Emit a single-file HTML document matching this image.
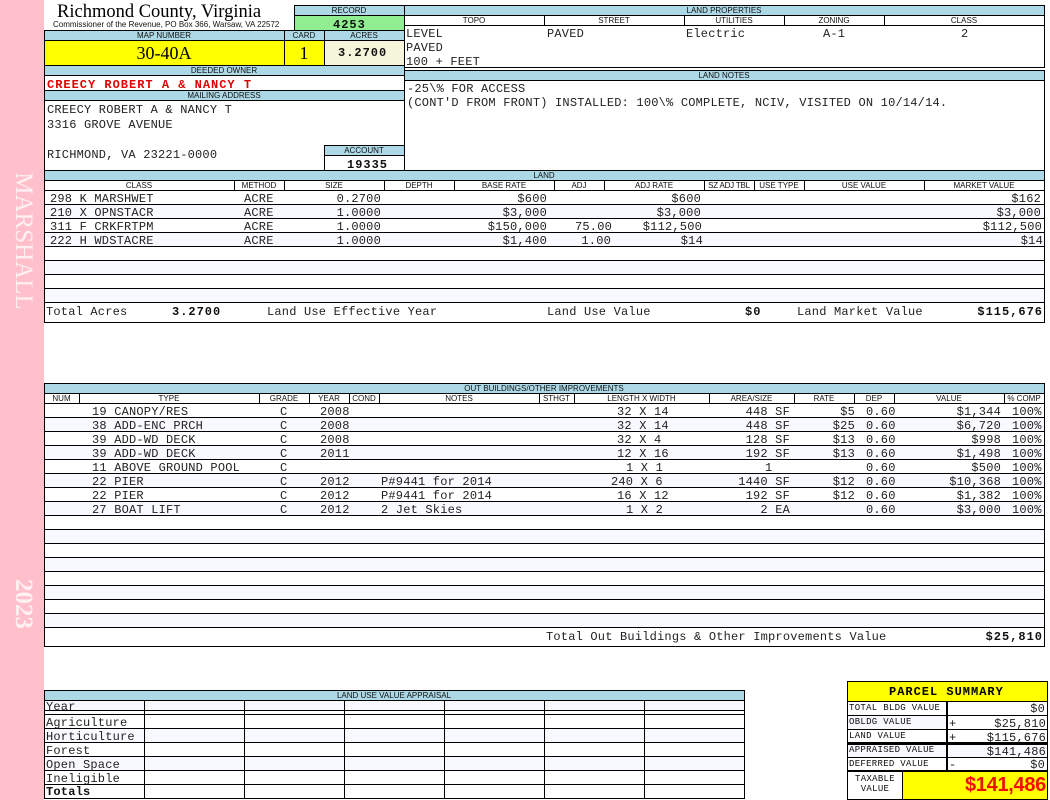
<!DOCTYPE html>
<html><head><meta charset="utf-8"><title>Richmond County, Virginia</title>
<style>
html,body{margin:0;padding:0;background:#fff;width:1050px;height:800px;overflow:hidden}
#p{position:relative;width:1050px;height:800px;overflow:hidden}
#p div{position:absolute}
.b{background:#ADD8E6}
.g{background:#F8F8FF;left:45px;width:999px;height:13px}
.h{background:#000;height:1px}
.v{background:#000;width:1px}
.l{font:8px/10px "Liberation Sans",sans-serif;text-align:center;color:#111;white-space:nowrap;height:10px}
.t,.r{font:12px/14px "Liberation Mono",monospace;letter-spacing:.2px;color:#222;white-space:pre;height:14px;transform:translateY(1px)}
.bd{font-weight:bold;letter-spacing:1px;color:#111}
.s{font:9px/13px "Liberation Mono",monospace;letter-spacing:.3px;color:#111;white-space:pre}
</style></head><body><div id="p">
<div style="left:0;top:0;width:44px;height:800px;background:#FFC0CB"></div>
<div style="left:-47px;top:226px;width:140px;height:30px;transform:rotate(90deg);font:25px/30px 'Liberation Serif',serif;color:#FFF0F2;text-align:center;white-space:nowrap">MARSHALL</div>
<div style="left:-7px;top:589px;width:60px;height:30px;transform:rotate(90deg);font:bold 25px/30px 'Liberation Serif',serif;color:#FFF0F2;text-align:center">2023</div>

<div style="left:57px;top:2px;font:18.5px/20px 'Liberation Serif',serif;color:#000;white-space:nowrap">Richmond County, Virginia</div>
<div style="left:53px;top:20px;font:8px/10px 'Liberation Sans',sans-serif;color:#111;white-space:nowrap">Commissioner of the Revenue, PO Box 366, Warsaw, VA 22572</div>

<!-- backgrounds top-left -->
<div class="b" style="left:294px;top:5px;width:110px;height:11px"></div>
<div style="left:294px;top:16px;width:110px;height:14px;background:#90EE90"></div>
<div class="b" style="left:44px;top:30px;width:360px;height:11px"></div>
<div style="left:44px;top:41px;width:280px;height:24px;background:#FFFF00"></div>
<div style="left:324px;top:41px;width:80px;height:24px;background:#F5F5DC"></div>
<div class="b" style="left:44px;top:65px;width:360px;height:10px"></div>
<div class="b" style="left:44px;top:90px;width:360px;height:10px"></div>
<div class="b" style="left:324px;top:145px;width:80px;height:10px"></div>

<div class="h" style="left:294px;top:5px;width:751px"></div>
<div class="h" style="left:294px;top:15px;width:110px"></div>
<div class="h" style="left:44px;top:30px;width:360px"></div>
<div class="h" style="left:44px;top:40px;width:360px"></div>
<div class="h" style="left:44px;top:65px;width:360px"></div>
<div class="h" style="left:44px;top:75px;width:360px"></div>
<div class="h" style="left:44px;top:90px;width:360px"></div>
<div class="h" style="left:44px;top:100px;width:360px"></div>
<div class="h" style="left:324px;top:145px;width:80px"></div>
<div class="h" style="left:324px;top:155px;width:80px"></div>
<div class="v" style="left:294px;top:5px;height:25px"></div>
<div class="v" style="left:44px;top:30px;height:140px"></div>
<div class="v" style="left:284px;top:30px;height:35px"></div>
<div class="v" style="left:324px;top:30px;height:35px"></div>
<div class="v" style="left:324px;top:145px;height:25px"></div>
<div class="v" style="left:404px;top:5px;height:165px"></div>

<div class="l" style="left:294px;top:6px;width:110px">RECORD</div>
<div class="t bd" style="left:333px;top:17px">4253</div>
<div class="l" style="left:44px;top:31px;width:240px">MAP NUMBER</div>
<div class="l" style="left:284px;top:31px;width:40px">CARD</div>
<div class="l" style="left:324px;top:31px;width:80px">ACRES</div>
<div style="left:44px;top:42px;width:240px;text-align:center;font:18px/22px 'Liberation Serif',serif;color:#000">30-40A</div>
<div style="left:284px;top:42px;width:40px;text-align:center;font:18px/22px 'Liberation Serif',serif;color:#000">1</div>
<div class="t bd" style="left:338px;top:45px">3.2700</div>
<div class="l" style="left:44px;top:66px;width:360px">DEEDED OWNER</div>
<div class="t bd" style="left:47px;top:77px;color:#E00000">CREECY ROBERT A &amp; NANCY T</div>
<div class="l" style="left:44px;top:91px;width:360px">MAILING ADDRESS</div>
<div class="t" style="left:47px;top:102px">CREECY ROBERT A &amp; NANCY T</div>
<div class="t" style="left:47px;top:117px">3316 GROVE AVENUE</div>
<div class="t" style="left:47px;top:147px">RICHMOND, VA 23221-0000</div>
<div class="l" style="left:324px;top:146px;width:80px">ACCOUNT</div>
<div class="t bd" style="left:347px;top:157px">19335</div>

<!-- land properties -->
<div class="b" style="left:405px;top:6px;width:639px;height:9px"></div>
<div class="h" style="left:404px;top:15px;width:641px"></div>
<div class="h" style="left:404px;top:25px;width:641px"></div>
<div class="h" style="left:404px;top:67px;width:641px"></div>
<div class="v" style="left:1044px;top:5px;height:63px"></div>
<div class="v" style="left:544px;top:15px;height:10px"></div>
<div class="v" style="left:684px;top:15px;height:10px"></div>
<div class="v" style="left:784px;top:15px;height:10px"></div>
<div class="v" style="left:884px;top:15px;height:10px"></div>
<div class="l" style="left:404px;top:6px;width:640px">LAND PROPERTIES</div>
<div class="l" style="left:404px;top:16px;width:140px">TOPO</div>
<div class="l" style="left:544px;top:16px;width:140px">STREET</div>
<div class="l" style="left:684px;top:16px;width:100px">UTILITIES</div>
<div class="l" style="left:784px;top:16px;width:100px">ZONING</div>
<div class="l" style="left:884px;top:16px;width:160px">CLASS</div>
<div class="t" style="left:406px;top:26px">LEVEL</div>
<div class="t" style="left:547px;top:26px">PAVED</div>
<div class="t" style="left:686px;top:26px">Electric</div>
<div class="t" style="left:823px;top:26px">A-1</div>
<div class="t" style="left:961px;top:26px">2</div>
<div class="t" style="left:406px;top:40px">PAVED</div>
<div class="t" style="left:406px;top:54px">100 + FEET</div>

<!-- land notes -->
<div class="h" style="left:404px;top:70px;width:641px"></div>
<div class="b" style="left:405px;top:71px;width:639px;height:9px"></div>
<div class="h" style="left:404px;top:80px;width:641px"></div>
<div class="v" style="left:1044px;top:70px;height:100px"></div>
<div class="l" style="left:404px;top:71px;width:640px">LAND NOTES</div>
<div class="t" style="left:407px;top:81px">-25\% FOR ACCESS</div>
<div class="t" style="left:407px;top:95px">(CONT'D FROM FRONT) INSTALLED: 100\% COMPLETE, NCIV, VISITED ON 10/14/14.</div>

<!-- land table -->
<div class="b" style="left:44px;top:170px;width:1001px;height:10px"></div>
<div class="g" style="top:205px"></div><div class="g" style="top:233px"></div><div class="g" style="top:261px"></div><div class="g" style="top:289px"></div>
<div class="h" style="left:44px;top:170px;width:1001px"></div>
<div class="h" style="left:44px;top:180px;width:1001px"></div>
<div class="h" style="left:44px;top:190px;width:1001px"></div>
<div class="h" style="left:44px;top:204px;width:1001px"></div>
<div class="h" style="left:44px;top:218px;width:1001px"></div>
<div class="h" style="left:44px;top:232px;width:1001px"></div>
<div class="h" style="left:44px;top:246px;width:1001px"></div>
<div class="h" style="left:44px;top:260px;width:1001px"></div>
<div class="h" style="left:44px;top:274px;width:1001px"></div>
<div class="h" style="left:44px;top:288px;width:1001px"></div>
<div class="h" style="left:44px;top:302px;width:1001px"></div>
<div class="h" style="left:44px;top:322px;width:1001px"></div>
<div class="v" style="left:44px;top:170px;height:152px"></div>
<div class="v" style="left:1044px;top:170px;height:152px"></div>
<div class="v" style="left:234px;top:180px;height:10px"></div>
<div class="v" style="left:284px;top:180px;height:10px"></div>
<div class="v" style="left:384px;top:180px;height:10px"></div>
<div class="v" style="left:454px;top:180px;height:10px"></div>
<div class="v" style="left:554px;top:180px;height:10px"></div>
<div class="v" style="left:604px;top:180px;height:10px"></div>
<div class="v" style="left:704px;top:180px;height:10px"></div>
<div class="v" style="left:754px;top:180px;height:10px"></div>
<div class="v" style="left:804px;top:180px;height:10px"></div>
<div class="v" style="left:924px;top:180px;height:10px"></div>
<div class="l" style="left:44px;top:171px;width:1000px">LAND</div>
<div class="l" style="left:44px;top:181px;width:190px">CLASS</div>
<div class="l" style="left:234px;top:181px;width:50px">METHOD</div>
<div class="l" style="left:284px;top:181px;width:100px">SIZE</div>
<div class="l" style="left:384px;top:181px;width:70px">DEPTH</div>
<div class="l" style="left:454px;top:181px;width:100px">BASE RATE</div>
<div class="l" style="left:554px;top:181px;width:50px">ADJ</div>
<div class="l" style="left:604px;top:181px;width:100px">ADJ RATE</div>
<div class="l" style="left:704px;top:181px;width:50px;letter-spacing:-.2px">SZ ADJ TBL</div>
<div class="l" style="left:754px;top:181px;width:50px">USE TYPE</div>
<div class="l" style="left:804px;top:181px;width:120px">USE VALUE</div>
<div class="l" style="left:924px;top:181px;width:120px">MARKET VALUE</div>

<div class="t" style="left:50px;top:191px">298 K MARSHWET</div><div class="t" style="left:244px;top:191px">ACRE</div><div class="r" style="right:669px;top:191px">0.2700</div><div class="r" style="right:503px;top:191px">$600</div><div class="r" style="right:349px;top:191px">$600</div><div class="r" style="right:9px;top:191px">$162</div>
<div class="t" style="left:50px;top:205px">210 X OPNSTACR</div><div class="t" style="left:244px;top:205px">ACRE</div><div class="r" style="right:669px;top:205px">1.0000</div><div class="r" style="right:503px;top:205px">$3,000</div><div class="r" style="right:349px;top:205px">$3,000</div><div class="r" style="right:9px;top:205px">$3,000</div>
<div class="t" style="left:50px;top:219px">311 F CRKFRTPM</div><div class="t" style="left:244px;top:219px">ACRE</div><div class="r" style="right:669px;top:219px">1.0000</div><div class="r" style="right:503px;top:219px">$150,000</div><div class="r" style="right:438px;top:219px">75.00</div><div class="r" style="right:348px;top:219px">$112,500</div><div class="r" style="right:8px;top:219px">$112,500</div>
<div class="t" style="left:50px;top:233px">222 H WDSTACRE</div><div class="t" style="left:244px;top:233px">ACRE</div><div class="r" style="right:669px;top:233px">1.0000</div><div class="r" style="right:503px;top:233px">$1,400</div><div class="r" style="right:439px;top:233px">1.00</div><div class="r" style="right:347px;top:233px">$14</div><div class="r" style="right:7px;top:233px">$14</div>

<div class="t" style="left:46px;top:304px">Total Acres</div>
<div class="t bd" style="left:172px;top:304px;letter-spacing:1px">3.2700</div>
<div class="t" style="left:267px;top:304px">Land Use Effective Year</div>
<div class="t" style="left:547px;top:304px">Land Use Value</div>
<div class="t bd" style="left:745px;top:304px">$0</div>
<div class="t" style="left:797px;top:304px">Land Market Value</div>
<div class="r bd" style="right:7px;top:304px">$115,676</div>

<!-- out buildings -->
<div class="b" style="left:44px;top:383px;width:1001px;height:10px"></div>
<div class="g" style="top:418px"></div><div class="g" style="top:446px"></div><div class="g" style="top:474px"></div><div class="g" style="top:502px"></div><div class="g" style="top:530px"></div><div class="g" style="top:558px"></div><div class="g" style="top:586px"></div><div class="g" style="top:614px"></div>
<div class="h" style="left:44px;top:383px;width:1001px"></div>
<div class="h" style="left:44px;top:393px;width:1001px"></div>
<div class="h" style="left:44px;top:403px;width:1001px"></div>
<div class="h" style="left:44px;top:417px;width:1001px"></div>
<div class="h" style="left:44px;top:431px;width:1001px"></div>
<div class="h" style="left:44px;top:445px;width:1001px"></div>
<div class="h" style="left:44px;top:459px;width:1001px"></div>
<div class="h" style="left:44px;top:473px;width:1001px"></div>
<div class="h" style="left:44px;top:487px;width:1001px"></div>
<div class="h" style="left:44px;top:501px;width:1001px"></div>
<div class="h" style="left:44px;top:515px;width:1001px"></div>
<div class="h" style="left:44px;top:529px;width:1001px"></div>
<div class="h" style="left:44px;top:543px;width:1001px"></div>
<div class="h" style="left:44px;top:557px;width:1001px"></div>
<div class="h" style="left:44px;top:571px;width:1001px"></div>
<div class="h" style="left:44px;top:585px;width:1001px"></div>
<div class="h" style="left:44px;top:599px;width:1001px"></div>
<div class="h" style="left:44px;top:613px;width:1001px"></div>
<div class="h" style="left:44px;top:627px;width:1001px"></div>
<div class="h" style="left:44px;top:646px;width:1001px"></div>
<div class="v" style="left:44px;top:383px;height:264px"></div>
<div class="v" style="left:1044px;top:383px;height:264px"></div>
<div class="v" style="left:79px;top:393px;height:10px"></div>
<div class="v" style="left:259px;top:393px;height:10px"></div>
<div class="v" style="left:309px;top:393px;height:10px"></div>
<div class="v" style="left:349px;top:393px;height:10px"></div>
<div class="v" style="left:379px;top:393px;height:10px"></div>
<div class="v" style="left:539px;top:393px;height:10px"></div>
<div class="v" style="left:574px;top:393px;height:10px"></div>
<div class="v" style="left:709px;top:393px;height:10px"></div>
<div class="v" style="left:794px;top:393px;height:10px"></div>
<div class="v" style="left:854px;top:393px;height:10px"></div>
<div class="v" style="left:894px;top:393px;height:10px"></div>
<div class="v" style="left:1004px;top:393px;height:10px"></div>
<div class="l" style="left:44px;top:384px;width:1000px">OUT BUILDINGS/OTHER IMPROVEMENTS</div>
<div class="l" style="left:44px;top:394px;width:35px">NUM</div>
<div class="l" style="left:79px;top:394px;width:180px">TYPE</div>
<div class="l" style="left:259px;top:394px;width:50px">GRADE</div>
<div class="l" style="left:309px;top:394px;width:40px">YEAR</div>
<div class="l" style="left:349px;top:394px;width:30px">COND</div>
<div class="l" style="left:379px;top:394px;width:160px">NOTES</div>
<div class="l" style="left:539px;top:394px;width:35px">STHGT</div>
<div class="l" style="left:574px;top:394px;width:135px">LENGTH X WIDTH</div>
<div class="l" style="left:709px;top:394px;width:85px">AREA/SIZE</div>
<div class="l" style="left:794px;top:394px;width:60px">RATE</div>
<div class="l" style="left:854px;top:394px;width:40px">DEP</div>
<div class="l" style="left:894px;top:394px;width:110px">VALUE</div>
<div class="l" style="left:1004px;top:394px;width:40px">% COMP</div>

<div class="t" style="left:92px;top:404px">19 CANOPY/RES</div><div class="t" style="left:280px;top:404px">C</div><div class="t" style="left:320px;top:404px">2008</div><div class="t" style="left:617px;top:404px">32 X 14</div><div class="r" style="right:260px;top:404px">448 SF</div><div class="r" style="right:195px;top:404px">$5</div><div class="t" style="left:866px;top:404px">0.60</div><div class="r" style="right:49px;top:404px">$1,344</div><div class="t" style="left:1012px;top:404px">100%</div>
<div class="t" style="left:92px;top:418px">38 ADD-ENC PRCH</div><div class="t" style="left:280px;top:418px">C</div><div class="t" style="left:320px;top:418px">2008</div><div class="t" style="left:617px;top:418px">32 X 14</div><div class="r" style="right:260px;top:418px">448 SF</div><div class="r" style="right:195px;top:418px">$25</div><div class="t" style="left:866px;top:418px">0.60</div><div class="r" style="right:49px;top:418px">$6,720</div><div class="t" style="left:1012px;top:418px">100%</div>
<div class="t" style="left:92px;top:432px">39 ADD-WD DECK</div><div class="t" style="left:280px;top:432px">C</div><div class="t" style="left:320px;top:432px">2008</div><div class="t" style="left:617px;top:432px">32 X 4</div><div class="r" style="right:260px;top:432px">128 SF</div><div class="r" style="right:195px;top:432px">$13</div><div class="t" style="left:866px;top:432px">0.60</div><div class="r" style="right:49px;top:432px">$998</div><div class="t" style="left:1012px;top:432px">100%</div>
<div class="t" style="left:92px;top:446px">39 ADD-WD DECK</div><div class="t" style="left:280px;top:446px">C</div><div class="t" style="left:320px;top:446px">2011</div><div class="t" style="left:617px;top:446px">12 X 16</div><div class="r" style="right:260px;top:446px">192 SF</div><div class="r" style="right:195px;top:446px">$13</div><div class="t" style="left:866px;top:446px">0.60</div><div class="r" style="right:49px;top:446px">$1,498</div><div class="t" style="left:1012px;top:446px">100%</div>
<div class="t" style="left:92px;top:460px">11 ABOVE GROUND POOL</div><div class="t" style="left:280px;top:460px">C</div><div class="t" style="left:626px;top:460px">1 X 1</div><div class="t" style="left:765px;top:460px">1</div><div class="t" style="left:866px;top:460px">0.60</div><div class="r" style="right:49px;top:460px">$500</div><div class="t" style="left:1012px;top:460px">100%</div>
<div class="t" style="left:92px;top:474px">22 PIER</div><div class="t" style="left:280px;top:474px">C</div><div class="t" style="left:320px;top:474px">2012</div><div class="t" style="left:381px;top:474px">P#9441 for 2014</div><div class="t" style="left:611px;top:474px">240 X 6</div><div class="r" style="right:260px;top:474px">1440 SF</div><div class="r" style="right:195px;top:474px">$12</div><div class="t" style="left:866px;top:474px">0.60</div><div class="r" style="right:49px;top:474px">$10,368</div><div class="t" style="left:1012px;top:474px">100%</div>
<div class="t" style="left:92px;top:488px">22 PIER</div><div class="t" style="left:280px;top:488px">C</div><div class="t" style="left:320px;top:488px">2012</div><div class="t" style="left:381px;top:488px">P#9441 for 2014</div><div class="t" style="left:617px;top:488px">16 X 12</div><div class="r" style="right:260px;top:488px">192 SF</div><div class="r" style="right:195px;top:488px">$12</div><div class="t" style="left:866px;top:488px">0.60</div><div class="r" style="right:49px;top:488px">$1,382</div><div class="t" style="left:1012px;top:488px">100%</div>
<div class="t" style="left:92px;top:502px">27 BOAT LIFT</div><div class="t" style="left:280px;top:502px">C</div><div class="t" style="left:320px;top:502px">2012</div><div class="t" style="left:381px;top:502px">2 Jet Skies</div><div class="t" style="left:626px;top:502px">1 X 2</div><div class="r" style="right:260px;top:502px">2 EA</div><div class="t" style="left:866px;top:502px">0.60</div><div class="r" style="right:49px;top:502px">$3,000</div><div class="t" style="left:1012px;top:502px">100%</div>

<div class="t" style="left:546px;top:629px">Total Out Buildings &amp; Other Improvements Value</div>
<div class="r bd" style="right:7px;top:629px">$25,810</div>

<!-- land use value -->
<div class="b" style="left:44px;top:690px;width:701px;height:10px"></div>
<div style="left:45px;top:701px;width:699px;height:9px;background:#F8F8FF"></div>
<div style="left:45px;top:729px;width:699px;height:13px;background:#F8F8FF"></div>
<div style="left:45px;top:757px;width:699px;height:13px;background:#F8F8FF"></div>
<div class="h" style="left:44px;top:690px;width:701px"></div>
<div class="h" style="left:44px;top:700px;width:701px"></div>
<div class="h" style="left:44px;top:710px;width:701px"></div>
<div class="h" style="left:44px;top:714px;width:701px"></div>
<div class="h" style="left:44px;top:728px;width:701px"></div>
<div class="h" style="left:44px;top:742px;width:701px"></div>
<div class="h" style="left:44px;top:756px;width:701px"></div>
<div class="h" style="left:44px;top:770px;width:701px"></div>
<div class="h" style="left:44px;top:784px;width:701px"></div>
<div class="h" style="left:44px;top:798px;width:701px"></div>
<div class="v" style="left:44px;top:690px;height:109px"></div>
<div class="v" style="left:144px;top:700px;height:99px"></div>
<div class="v" style="left:244px;top:700px;height:99px"></div>
<div class="v" style="left:344px;top:700px;height:99px"></div>
<div class="v" style="left:444px;top:700px;height:99px"></div>
<div class="v" style="left:544px;top:700px;height:99px"></div>
<div class="v" style="left:644px;top:700px;height:99px"></div>
<div class="v" style="left:744px;top:690px;height:109px"></div>
<div class="l" style="left:44px;top:691px;width:700px">LAND USE VALUE APPRAISAL</div>
<div class="t" style="left:46px;top:699px">Year</div>
<div class="t" style="left:46px;top:715px">Agriculture</div>
<div class="t" style="left:46px;top:729px">Horticulture</div>
<div class="t" style="left:46px;top:743px">Forest</div>
<div class="t" style="left:46px;top:757px">Open Space</div>
<div class="t" style="left:46px;top:771px">Ineligible</div>
<div class="t bd" style="left:46px;top:784px;letter-spacing:.2px">Totals</div>

<!-- parcel summary -->
<div style="left:847px;top:681px;width:200px;height:20px;background:#FFFF00"></div>
<div style="left:848px;top:716px;width:99px;height:13px;background:#F8F8FF"></div>
<div style="left:848px;top:744px;width:99px;height:13px;background:#F8F8FF"></div>
<div style="left:950px;top:744px;width:96px;height:13px;background:#F8F8FF"></div>
<div style="left:902px;top:772px;width:145px;height:27px;background:#FFFF00"></div>
<div class="h" style="left:847px;top:681px;width:201px"></div>
<div class="h" style="left:847px;top:701px;width:201px"></div>
<div class="h" style="left:847px;top:715px;width:201px"></div>
<div class="h" style="left:847px;top:729px;width:201px"></div>
<div class="h" style="left:847px;top:742px;width:201px;height:3px"></div>
<div class="h" style="left:847px;top:757px;width:201px"></div>
<div class="h" style="left:847px;top:770px;width:201px;height:2px"></div>
<div class="h" style="left:847px;top:799px;width:201px"></div>
<div class="v" style="left:847px;top:681px;height:119px"></div>
<div class="v" style="left:1047px;top:681px;height:119px"></div>
<div class="v" style="left:946px;top:701px;width:2px;height:70px"></div>
<div class="v" style="left:902px;top:771px;height:28px"></div>
<div class="t bd" style="left:889px;top:684px;color:#000">PARCEL SUMMARY</div>
<div class="s" style="left:849px;top:702px">TOTAL BLDG VALUE</div>
<div class="s" style="left:849px;top:716px">OBLDG VALUE</div>
<div class="s" style="left:849px;top:730px">LAND VALUE</div>
<div class="s" style="left:849px;top:744px">APPRAISED VALUE</div>
<div class="s" style="left:849px;top:758px">DEFERRED VALUE</div>
<div class="s" style="left:848px;top:773px;width:54px;text-align:center">TAXABLE</div>
<div class="s" style="left:848px;top:783px;width:54px;text-align:center">VALUE</div>
<div class="t" style="left:949px;top:716px">+</div>
<div class="t" style="left:949px;top:730px">+</div>
<div class="t" style="left:949px;top:757px">-</div>
<div class="r" style="right:5px;top:701px">$0</div>
<div class="r" style="right:4px;top:716px">$25,810</div>
<div class="r" style="right:4px;top:730px">$115,676</div>
<div class="r" style="right:4px;top:744px">$141,486</div>
<div class="r" style="right:5px;top:757px">$0</div>
<div style="right:4px;top:773px;font:bold 20px/24px 'Liberation Sans',sans-serif;color:#EE1100;white-space:nowrap;letter-spacing:-.3px">$141,486</div>
</div></body></html>
